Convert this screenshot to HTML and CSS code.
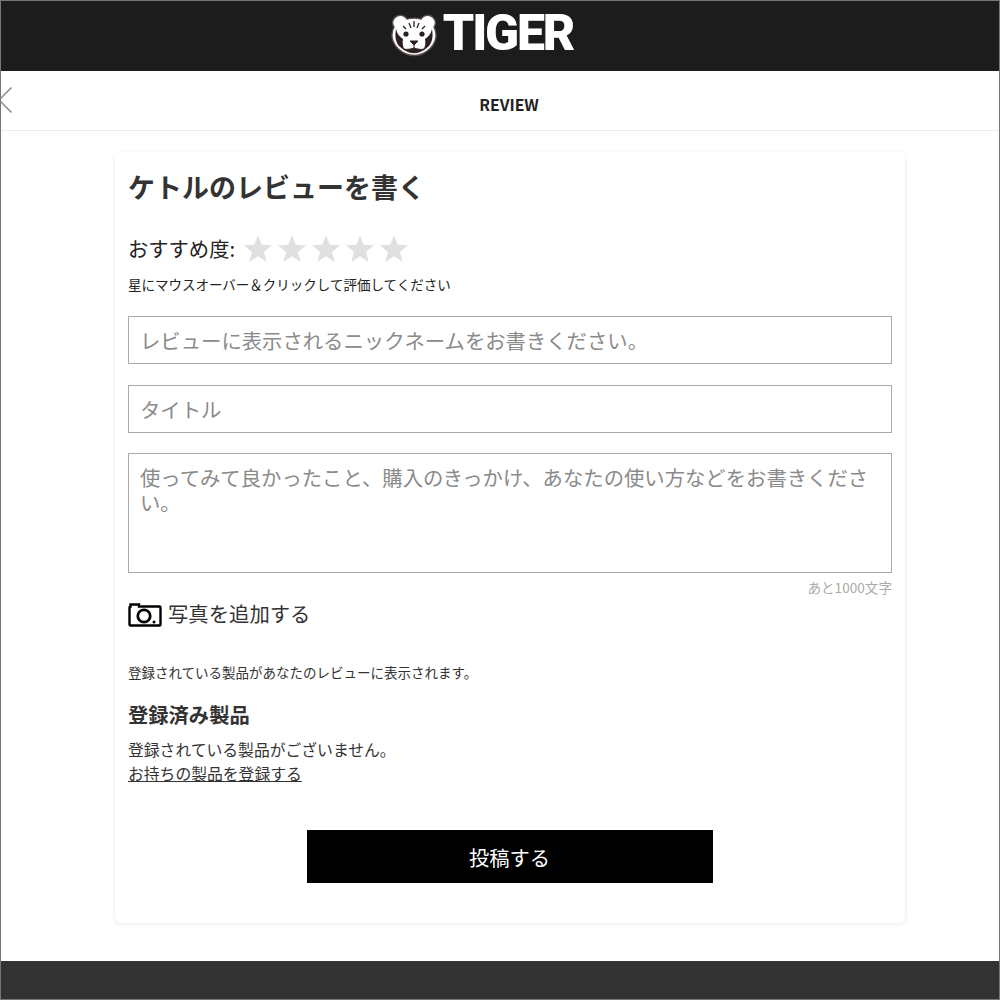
FILE: index.html
```html
<!DOCTYPE html>
<html lang="ja">
<head>
<meta charset="utf-8">
<title>REVIEW</title>
<link rel="stylesheet" href="styles.css">
</head>
<body>
<div class="frame">
  <header class="topbar">
    <div class="logo">
      <svg class="logo-face" width="46" height="43" viewBox="0 0 46 43">
        <path d="M6 2c4-2 8 0 10 3 4-1 10-1 14 0 2-3 6-5 10-3 4 2 6 7 3 11 2 4 3 9 1 14-2 6-8 11-13 13-4 2-11 2-16 0C10 38 4 33 2 27 0 22 1 17 3 13 0 9 2 4 6 2z" fill="#fff" stroke="#5a4a4a" stroke-width="1.400"/>
        <path d="M5 15c-1 6-1 12 3 17l6 5c-2-4-3-8-2-12-3-2-6-5-7-10zM41 15c1 6 1 12-3 17l-6 5c2-4 3-8 2-12 3-2 6-5 7-10z" fill="#2a2020"/>
        <circle cx="15" cy="20" r="2.600" fill="#2a2020"/><circle cx="31" cy="20" r="2.600" fill="#2a2020"/>
        <path d="M18 9l2 5M28 9l-2 5M23 7v6M12 12l3 3M34 12l-3 3" stroke="#2a2020" stroke-width="1.300" fill="none"/>
        <path d="M19 27h8l-4 4zM23 31v3M13 35c5 5 15 5 20 0-3 1-7 0-10-1-3 1-7 2-10 1z" fill="#2a2020" stroke="#2a2020"/>
      </svg>
      <span class="logo-text">TIGER</span>
    </div>
  </header>
  <nav class="subbar">
    <svg class="back" width="12" height="28" viewBox="0 0 12 28"><path d="M10.500 1.500L-2 14l12.500 12.500" fill="none" stroke="#888" stroke-width="1.500"/></svg>
    <span class="subtitle">REVIEW</span>
  </nav>
  <main class="page">
    <section class="card">
      <h1 class="title">ケトルのレビューを書く</h1>
      <div class="rating">
        <span class="rating-label">おすすめ度:</span>
        <div class="stars">
          <svg class="star" viewBox="0 0 28 27"><path d="M14 0l3.700 9.800 10.300.5-8 6.600 2.700 10.100L14 21.300 5.300 27 8 16.900 0 10.300l10.300-.5z"/></svg>
          <svg class="star" viewBox="0 0 28 27"><path d="M14 0l3.700 9.800 10.300.5-8 6.600 2.700 10.100L14 21.300 5.300 27 8 16.900 0 10.300l10.300-.5z"/></svg>
          <svg class="star" viewBox="0 0 28 27"><path d="M14 0l3.700 9.800 10.300.5-8 6.600 2.700 10.100L14 21.300 5.300 27 8 16.900 0 10.300l10.300-.5z"/></svg>
          <svg class="star" viewBox="0 0 28 27"><path d="M14 0l3.700 9.800 10.300.5-8 6.600 2.700 10.100L14 21.300 5.300 27 8 16.900 0 10.300l10.300-.5z"/></svg>
          <svg class="star" viewBox="0 0 28 27"><path d="M14 0l3.700 9.800 10.300.5-8 6.600 2.700 10.100L14 21.300 5.300 27 8 16.900 0 10.300l10.300-.5z"/></svg>
        </div>
      </div>
      <p class="hint">星にマウスオーバー＆クリックして評価してください</p>
      <div class="field">レビューに表示されるニックネームをお書きください。</div>
      <div class="field">タイトル</div>
      <div class="field area">使ってみて良かったこと、購入のきっかけ、あなたの使い方などをお書きください。</div>
      <p class="counter">あと1000文字</p>
      <div class="photo">
        <svg class="camera" width="34" height="26" viewBox="0 0 34 26">
          <path d="M2.500 5.500V3.500h8.500v2h20.500a1 1 0 0 1 1 1v17a1 1 0 0 1-1 1h-29a1 1 0 0 1-1-1v-17a1 1 0 0 1 1-1z" fill="#fff" stroke="#000" stroke-width="2.400"/>
          <circle cx="16" cy="15" r="6.200" fill="none" stroke="#000" stroke-width="2.800"/>
          <circle cx="26" cy="21" r="1.500" fill="#000"/>
        </svg>
        <span>写真を追加する</span>
      </div>
      <p class="note">登録されている製品があなたのレビューに表示されます。</p>
      <h2 class="subhead">登録済み製品</h2>
      <p class="empty">登録されている製品がございません。</p>
      <a class="register" href="#">お持ちの製品を登録する</a>
      <div class="actions"><button class="submit" type="button">投稿する</button></div>
    </section>
  </main>
  <footer class="footer"></footer>
</div>
</body>
</html>
```

FILE: styles.css
```css
* { box-sizing: border-box; }
html, body { margin: 0; padding: 0; }
body {
  font-family: "Noto Sans CJK JP", "Noto Sans", sans-serif;
  background: #fff;
  color: #333;
}
.frame {
  width: 1000px;
  height: 1000px;
  border: 1px solid #777;
  overflow: hidden;
  display: flex;
  flex-direction: column;
}
.topbar {
  height: 70px;
  flex: none;
  background: #1c1c1c;
  display: flex;
  justify-content: center;
  align-items: center;
}
.logo { display: flex; align-items: center; gap: 6px; margin-left: -36px; padding-bottom: 2px; }
.logo-face { flex: none; }
.logo-text {
  font-family: Roboto, "Liberation Sans", sans-serif;
  font-weight: 900;
  font-size: 50px;
  line-height: 44px;
  color: #fff;
  letter-spacing: -2.200px;
  padding-bottom: 5px;
}
.subbar {
  height: 60px;
  flex: none;
  border-bottom: 1px solid #ececec;
  display: flex;
  justify-content: center;
  align-items: center;
  position: relative;
}
.back { position: absolute; left: 0; top: 15px; }
.subtitle {
  font-weight: 700;
  font-size: 15.800px;
  color: #222;
  margin-left: 18px;
  padding-top: 8px;
}
.page { flex: 1; padding: 21px 94px 37px 114px; min-height: 0; }
.card {
  height: 771px;
  border-radius: 6px;
  background: #fff;
  box-shadow: 0 1px 5px rgba(0,0,0,.09);
  padding: 14px 13px 0 13px;
}
.title {
  margin: 0;
  font-size: 27px;
  line-height: 42px;
  font-weight: 700;
  color: #333;
}
.rating { display: flex; align-items: center; margin-top: 22px; height: 36px; }
.rating-label { font-size: 20.300px; line-height: 36px; color: #222; }
.stars { display: flex; gap: 6px; margin-left: 9px; }
.star { width: 28px; height: 27px; fill: #e0e0e0; display: block; }
.hint { margin: 7px 0 0; font-size: 13.500px; line-height: 22px; color: #222; }
.field {
  border: 1px solid #aaa;
  height: 48px;
  margin-top: 21px;
  padding: 0 11px;
  font-size: 20.350px;
  line-height: 47px;
  color: #8a8a8a;
}
.hint + .field { margin-top: 21px; }
.field.area { height: 120px; line-height: 25px; padding-top: 11px; margin-top: 20px; }
.counter { margin: 3px 0 0; text-align: right; font-size: 13.600px; line-height: 22px; color: #aaa; }
.photo { display: flex; align-items: center; gap: 6px; margin-top: -2px; height: 34px; font-size: 20.350px; line-height: 34px; color: #333; }
.camera { flex: none; margin-top: 2px; }
.note { margin: 31px 0 0; font-size: 13.500px; line-height: 22px; color: #333; }
.subhead { margin: 16px 0 0; font-size: 20.300px; line-height: 30px; font-weight: 700; color: #333; }
.empty { margin: 9px 0 0; font-size: 15.800px; line-height: 23px; color: #333; }
.register { display: inline-block; font-size: 15.800px; line-height: 24px; color: #333; text-decoration: underline; }
.actions { display: flex; justify-content: center; margin-top: 44px; }
.submit {
  width: 406px;
  height: 53px;
  border: 0;
  background: #000;
  color: #fff;
  font: inherit;
  font-size: 20.300px;
  margin-left: -1px;
}
.footer { flex: none; height: 38px; background: #333; }
```
